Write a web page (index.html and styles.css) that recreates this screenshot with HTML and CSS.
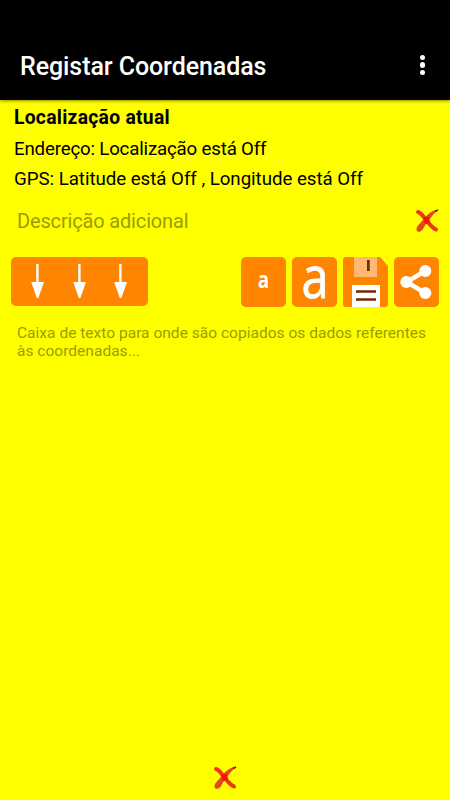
FILE: index.html
```html
<!DOCTYPE html>
<html lang="pt">
<head>
  <meta charset="UTF-8">
  <title>Registar Coordenadas</title>
  <meta name="viewport" content="width=device-width, initial-scale=1.0">
  <link rel="stylesheet" href="styles.css">
</head>
<body>
  <div class="topbar">
    <h1>Registar Coordenadas</h1>
    <div class="menu"><span></span><span></span><span></span></div>
  </div>

  <div class="info">
    <p class="bold">Localização atual</p>
    <p class="address">Endereço: Localização está Off</p>
    <p class="gps">GPS: Latitude está Off , Longitude está Off</p>
  </div>

  <div class="description">
    <span>Descrição adicional</span>
    <svg class="clear" width="24" height="24" viewBox="0 0 24 24">
      <path d="M3 3 C7 4 9 9 12 12 C15 16 18 19 21 20.500" fill="none" stroke="#ea3a1c" stroke-width="4" stroke-linecap="round"/>
      <path d="M22.500 1 C16 1 11 7 7 12 C5 15 1.500 17 1.500 20 C1.500 24 6 23.500 8 20 C11 14 16 8 22.500 1Z" fill="#e2481f"/>
      <path d="M8 8 L14 8 L15 14 L10 15Z" fill="#f51408"/>
      <path d="M20 2.500 L23 1" stroke="#702000" stroke-width="1.800"/>
    </svg>
  </div>

  <div class="toolbar">
    <button class="copy">
      <svg width="137" height="49" viewBox="0 0 137 49" fill="#fff">
        <path d="M25.200 7 H27.600 V25 H33 L27.400 41 H25.800 L20.200 25 H25.200Z"/>
        <path d="M67.200 7 H69.600 V25 H75 L69.400 41 H67.800 L62.200 25 H67.200Z"/>
        <path d="M108.200 7 H110.600 V25 H116 L110.400 41 H108.800 L103.200 25 H108.200Z"/>
      </svg>
    </button>
    <button class="tool">
      <svg width="45" height="50" viewBox="0 0 45 50">
        <text class="small" transform="translate(22.500 31) scale(0.82 1)" text-anchor="middle">a</text>
      </svg>
    </button>
    <button class="tool">
      <svg width="45" height="50" viewBox="0 0 45 50">
        <text class="big" transform="translate(23 40.500) scale(0.84 1)" text-anchor="middle">a</text>
      </svg>
    </button>
    <button class="tool save">
      <svg width="45" height="50" viewBox="0 0 45 50">
        <path d="M37 0 H45 V9Z" fill="#ff0"/>
        <rect x="11" width="23" height="20" fill="#ffb973"/>
        <rect x="24" y="3" width="2.700" height="11" fill="#663300"/>
        <rect x="9" y="28" width="28" height="22" fill="#fff"/>
        <path d="M13 34.500 H33 M13 42.500 H33" stroke="#702800" stroke-width="2.600"/>
      </svg>
    </button>
    <button class="tool share">
      <svg width="45" height="50" viewBox="0 0 45 50" fill="#fff">
        <path d="M31.300 14 L12.500 25 L31.300 36" fill="none" stroke="#fff" stroke-width="4.500"/>
        <circle cx="31.300" cy="14" r="6"/>
        <circle cx="12.300" cy="25" r="6"/>
        <circle cx="31.300" cy="36" r="6"/>
      </svg>
    </button>
  </div>

  <p class="textbox">Caixa de texto para onde são copiados os dados referentes às coordenadas...</p>

  <div class="footer">
    <svg class="clear" width="24" height="24" viewBox="0 0 24 24">
      <path d="M3 3 C7 4 9 9 12 12 C15 16 18 19 21 20.500" fill="none" stroke="#ea3a1c" stroke-width="4" stroke-linecap="round"/>
      <path d="M22.500 1 C16 1 11 7 7 12 C5 15 1.500 17 1.500 20 C1.500 24 6 23.500 8 20 C11 14 16 8 22.500 1Z" fill="#e2481f"/>
      <path d="M8 8 L14 8 L15 14 L10 15Z" fill="#f51408"/>
      <path d="M20 2.500 L23 1" stroke="#702000" stroke-width="1.800"/>
    </svg>
  </div>
</body>
</html>
```
FILE: styles.css
```css
* { box-sizing: border-box; }
body { font-family: Roboto, sans-serif; margin: 0; background: #ffff00; color: #000; height: 800px; display: flex; flex-direction: column; overflow: hidden; }
p, h1 { margin: 0; }
svg { display: block; overflow: visible; }
.topbar { display: flex; justify-content: space-between; align-items: center; height: 100px; padding: 33px 25px 0 20px; background: #000; color: #fff; box-shadow: 0 1px 3px rgba(0,0,0,0.45); }
h1 { font-size: 25px; font-weight: 500; line-height: 30px; letter-spacing: -0.080px; white-space: nowrap; }
.menu { display: flex; flex-direction: column; gap: 2px; padding-bottom: 3px; }
.menu span { width: 5.500px; height: 5.500px; border-radius: 50%; background: #fff; }
.info { padding: 2px 14px 0; font-size: 18.700px; line-height: 31px; white-space: nowrap; }
.bold { font-weight: bold; font-size: 19.300px; letter-spacing: 0.280px; }
.address { letter-spacing: -0.180px; padding-top: 1px; }
.gps { letter-spacing: -0.030px; margin-top: -1px; }
.description { display: flex; justify-content: space-between; align-items: center; height: 50px; margin-top: 1px; padding: 0 11px 0 17px; font-size: 20px; letter-spacing: -0.160px; color: #9c9c00; }
.toolbar { display: flex; align-items: flex-start; gap: 6px; margin-top: 11px; padding: 0 11px; height: 51px; }
button { border: none; padding: 0; margin: 0; background: #ff8400; border-radius: 5px; color: #fff; }
.copy { width: 137px; height: 49px; margin-right: auto; }
.tool { width: 45px; height: 50px; }
text { font-family: "Open Sans", sans-serif; fill: #fff; }
.small { font-size: 23px; font-weight: 700; }
.big { font-size: 58px; font-weight: 500; stroke: #fff; stroke-width: 0.800px; }
.save { border-radius: 3px; overflow: hidden; }
.textbox { margin-top: 16px; padding: 0 14px 0 17px; font-size: 15.550px; line-height: 18px; color: #9c9c00; }
.footer { display: flex; justify-content: center; margin-top: auto; padding-bottom: 10px; }
```
